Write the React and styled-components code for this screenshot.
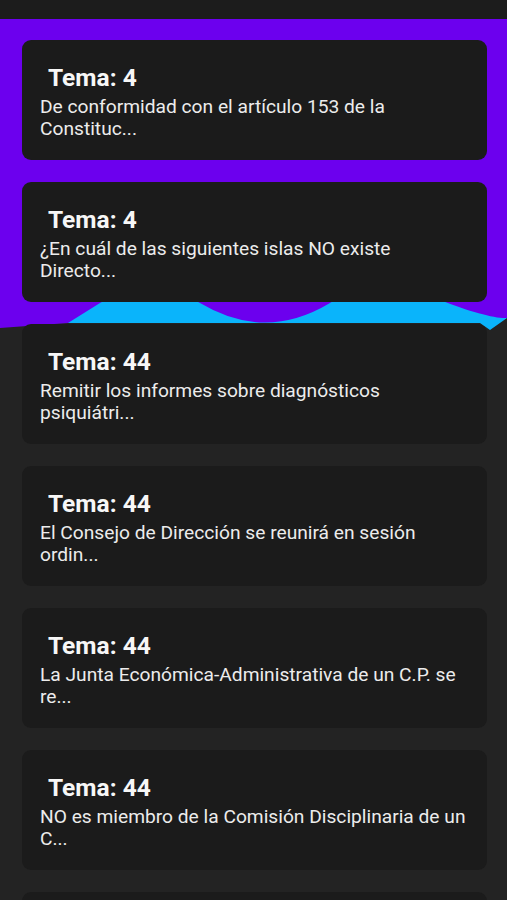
import React from "react";
import styled, { createGlobalStyle } from "styled-components";

const GlobalStyle = createGlobalStyle`
  html, body {
    margin: 0;
    padding: 0;
    background: #232323;
    font-family: Roboto, "Noto Sans", "Liberation Sans", sans-serif;
  }
  * { box-sizing: border-box; }
`;

const Page = styled.div`
  min-height: 900px;
  background: #232323;
  display: flex;
  flex-direction: column;
`;

const StatusBar = styled.div`
  height: 19px;
  background: #1c1c1c;
  flex: none;
`;

const Content = styled.div`
  position: relative;
  flex: 1;
`;

const HeaderArt = styled.svg`
  position: absolute;
  top: 0;
  left: 0;
  width: 100%;
  height: 320px;
  display: block;
  z-index: 0;
`;

const List = styled.div`
  position: relative;
  z-index: 1;
  display: flex;
  flex-direction: column;
  gap: 22px;
  padding: 21px 20px 20px 22px;
`;

const Card = styled.div`
  background: #1b1b1b;
  border-radius: 9px;
  height: 120px;
  padding: 24px 18px 20px 18px;
  display: flex;
  flex-direction: column;
  overflow: hidden;
`;

const Title = styled.div`
  font-size: 24.5px;
  line-height: 28px;
  font-weight: 700;
  color: #f7f7f7;
  padding-left: 8px;
`;

const Body = styled.div`
  margin-top: 4px;
  font-size: 19.2px;
  line-height: 22px;
  font-weight: 400;
  color: #ececec;
`;

const items = [
  { tema: 4, text: "De conformidad con el artículo 153 de la Constituc..." },
  { tema: 4, text: "¿En cuál de las siguientes islas NO existe Directo..." },
  { tema: 44, text: "Remitir los informes sobre diagnósticos psiquiátri..." },
  { tema: 44, text: "El Consejo de Dirección se reunirá en sesión ordin..." },
  { tema: 44, text: "La Junta Económica-Administrativa de un C.P. se re..." },
  { tema: 44, text: "NO es miembro de la Comisión Disciplinaria de un C..." },
  { tema: 44, text: "Corresponde a la Junta Económica-Administrativa..." },
];

function Header() {
  return (
    <HeaderArt viewBox="0 19 507 320" preserveAspectRatio="none" aria-hidden="true">
      <path
        d="M60 323 L100 288 H480 L507 300 V318 L490 330 L480 323 Z"
        fill="#0ab4fb"
      />
      <path
        d="M0 19 H507 V318 C497 319 470 312 440 300 Q382 268 330 303 Q265 342 200 303 Q150 272 100 303 L68 323 L0 328 Z"
        fill="#6c00ee"
      />
    </HeaderArt>
  );
}

export default function App() {
  return (
    <>
      <GlobalStyle />
      <Page>
        <StatusBar />
        <Content>
          <Header />
          <List>
            {items.map((it, i) => (
              <Card key={i}>
                <Title>Tema: {it.tema}</Title>
                <Body>{it.text}</Body>
              </Card>
            ))}
          </List>
        </Content>
      </Page>
    </>
  );
}
